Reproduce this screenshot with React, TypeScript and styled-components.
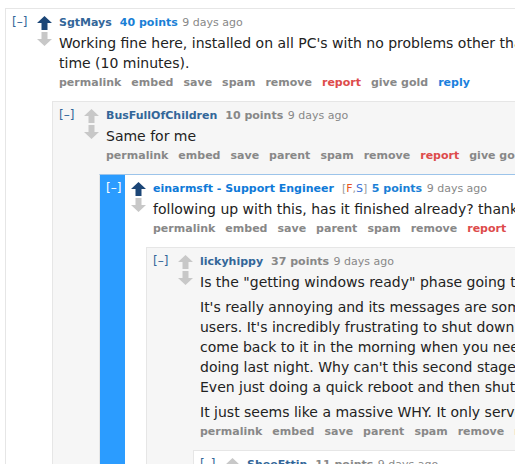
import React from 'react';
import styled, { createGlobalStyle } from 'styled-components';

const GlobalStyle = createGlobalStyle`
  html, body {
    margin: 0;
    padding: 0;
    background: #ffffff;
    overflow: hidden;
  }
  body {
    font-family: "DejaVu Sans", Verdana, sans-serif;
  }
`;

const StyledPage = styled.div`
  width: 1100px;
  padding: 8px 0 0 5px;
`;

const StyledComment = styled.div<{ $alt?: boolean; $highlight?: boolean }>`
  display: flex;
  border: 1px solid #e6e6e6;
  border-top-color: ${(props) => (props.$highlight ? '#9cc4ea' : '#e6e6e6')};
  border-right: none;
  background: ${(props) => (props.$alt ? '#f6f6f6' : '#ffffff')};
  margin-top: ${(props) => (props.$alt !== undefined ? '11px' : '0')};
`;

const StyledCollapse = styled.div<{ $highlight?: boolean }>`
  flex: 0 0 25px;
  box-sizing: border-box;
  padding: 6px 0 0 6px;
  background: ${(props) => (props.$highlight ? '#2b9cff' : 'transparent')};
  color: ${(props) => (props.$highlight ? '#ffffff' : '#336699')};
  font-size: 12px;
  line-height: 14px;
`;

const StyledMain = styled.div`
  flex: 1;
  min-width: 0;
`;

const StyledRow = styled.div`
  display: flex;
`;

const StyledArrows = styled.div`
  flex: 0 0 15px;
  margin: 7px 0 0 6px;
  display: flex;
  flex-direction: column;
  gap: 2px;
`;

const StyledEntry = styled.div`
  margin-left: 7px;
  padding-top: 7px;
`;

const StyledTagline = styled.div`
  font-size: 11px;
  line-height: 13px;
  color: #888888;
  white-space: nowrap;
`;

const StyledAuthor = styled.span<{ $admin?: boolean }>`
  font-weight: bold;
  color: ${(props) => (props.$admin ? '#0f7ad8' : '#336699')};
  margin-right: 8px;
`;

const StyledFlags = styled.span`
  color: #999999;
  margin-right: 1px;
`;

const StyledFlag = styled.span<{ $color: string }>`
  color: ${(props) => props.$color};
`;

const StyledScore = styled.span<{ $voted?: boolean }>`
  font-weight: bold;
  color: ${(props) => (props.$voted ? '#1a7fd6' : '#888888')};
  margin-right: 1px;
`;

const StyledBody = styled.div`
  margin-top: 4px;
  font-size: 14px;
  line-height: 20px;
  color: #222222;
  white-space: nowrap;

  p {
    margin: 0 0 5px;
  }

  p:last-child {
    margin-bottom: 0;
  }
`;

const StyledButtons = styled.ul`
  list-style: none;
  display: flex;
  gap: 10px;
  margin: 3px 0 0;
  padding: 0;
  font-size: 11px;
  line-height: 14px;
  font-weight: bold;
  white-space: nowrap;
`;

const StyledButton = styled.li<{ $tone?: 'red' | 'blue' }>`
  color: ${(props) => (props.$tone === 'red' ? '#dd4b4b' : props.$tone === 'blue' ? '#1a80dd' : '#888888')};
`;

const StyledChildren = styled.div`
  margin-left: 21px;
`;

const Arrow = ({ down, active }: { down?: boolean; active?: boolean }) => (
  <svg width="15" height="14" viewBox="0 0 15 14">
    <polygon
      points={down ? '7.5,14 15,7 10.5,7 10.5,0 4.5,0 4.5,7 0,7' : '7.5,0 15,7 10.5,7 10.5,14 4.5,14 4.5,7 0,7'}
      fill={active ? '#1c4677' : '#c8c8c8'}
    />
  </svg>
);

type CommentProps = {
  alt?: boolean;
  author: string;
  admin?: boolean;
  flags?: boolean;
  score: string;
  voted?: boolean;
  body?: React.ReactNode;
  buttons?: string[];
  highlight?: boolean;
  children?: React.ReactNode;
};

const Comment = ({ alt, author, admin, flags, score, voted, body, buttons, highlight, children }: CommentProps) => (
  <StyledComment $alt={alt} $highlight={highlight}>
    <StyledCollapse $highlight={highlight}>[–]</StyledCollapse>
    <StyledMain>
      <StyledRow>
        <StyledArrows>
          <Arrow active={voted} />
          <Arrow down />
        </StyledArrows>
        <StyledEntry>
          <StyledTagline>
            <StyledAuthor $admin={admin}>{author}</StyledAuthor>
            {flags && (
              <StyledFlags>
                [<StyledFlag $color="#e8551f">F</StyledFlag>,<StyledFlag $color="#3a6fd8">S</StyledFlag>]{' '}
              </StyledFlags>
            )}
            <StyledScore $voted={voted}>{score}</StyledScore> 9 days ago
          </StyledTagline>
          {body && <StyledBody>{body}</StyledBody>}
          {buttons && (
            <StyledButtons>
              {buttons.map((b) => (
                <StyledButton key={b} $tone={b === 'report' ? 'red' : b === 'reply' ? 'blue' : undefined}>
                  {b}
                </StyledButton>
              ))}
            </StyledButtons>
          )}
        </StyledEntry>
      </StyledRow>
      {children && <StyledChildren>{children}</StyledChildren>}
    </StyledMain>
  </StyledComment>
);

const childButtons = ['permalink', 'embed', 'save', 'parent', 'spam', 'remove', 'report', 'give gold', 'reply'];

const App = () => {
  return (
    <>
      <GlobalStyle />
      <StyledPage>
        <Comment
          author="SgtMays"
          score="40 points"
          voted
          body={
            <p>
              Working fine here, installed on all PC's with no problems other than the long update
              <br />
              time (10 minutes).
            </p>
          }
          buttons={['permalink', 'embed', 'save', 'spam', 'remove', 'report', 'give gold', 'reply']}
        >
          <Comment
            alt
            author="BusFullOfChildren"
            score="10 points"
            body={<p>Same for me</p>}
            buttons={childButtons}
          >
            <Comment
              alt={false}
              highlight
              admin
              flags
              author="einarmsft - Support Engineer"
              score="5 points"
              voted
              body={<p>following up with this, has it finished already? thanks!</p>}
              buttons={childButtons}
            >
              <Comment
                alt
                author="lickyhippy"
                score="37 points"
                body={
                  <>
                    <p>Is the "getting windows ready" phase going to be fixed?</p>
                    <p>
                      It's really annoying and its messages are something that only confuses most
                      <br />
                      users. It's incredibly frustrating to shut down your computer for the night and
                      <br />
                      come back to it in the morning when you need it to find it doing what it was
                      <br />
                      doing last night. Why can't this second stage be done during the shutdown?
                      <br />
                      Even just doing a quick reboot and then shutting down would be better.
                    </p>
                    <p>It just seems like a massive WHY. It only serves to annoy people.</p>
                  </>
                }
                buttons={childButtons}
              >
                <Comment alt={false} author="SheeFttin" score="11 points" />
              </Comment>
            </Comment>
          </Comment>
        </Comment>
      </StyledPage>
    </>
  );
};

export default App;
